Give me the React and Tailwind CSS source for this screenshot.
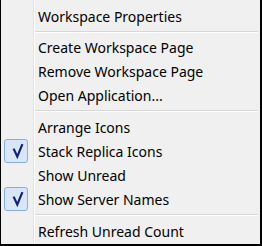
import React from "react";

function Check() {
  return (
    <div className="w-[24px] h-[24px] rounded-[3px] border border-[#86aee4] bg-[#d9e6f8] flex items-center justify-center">
      <svg width="22" height="22" viewBox="0 0 22 22">
        <path d="M8.6 8.6 L12.3 16.6 L17.4 4.2" fill="none" stroke="#14207f" strokeWidth="2.2" strokeLinejoin="miter" strokeLinecap="butt" />
      </svg>
    </div>
  );
}

function Item({ label, checked }) {
  return (
    <div className="flex items-center h-[24px]">
      <div className="w-[34px] shrink-0 pl-[3px] flex items-center">
        {checked ? <Check /> : null}
      </div>
      <span className="pl-[3px] whitespace-nowrap">{label}</span>
    </div>
  );
}

function Sep({ h }) {
  return (
    <div className={`flex items-center pl-[34px] pr-[2px] ${h}`}>
      <div className="flex-1 h-[2px] border-t border-[#d7d7d7] border-b border-b-white" />
    </div>
  );
}

export default function App() {
  return (
    <div
      className="w-[262px] h-[246px] border-l border-r-2 border-b-2 border-black bg-[linear-gradient(to_right,#f0f0f0_32px,#e2e3e3_32px,#e2e3e3_33px,#ffffff_33px,#ffffff_34px,#f0f0f0_34px)] text-[14px] text-black pt-[4px]"
      style={{ fontFamily: '"Noto Sans", "Open Sans", sans-serif' }}
    >
      <Item label="Workspace Properties" />
      <Sep h="h-[7px]" />
      <Item label="Create Workspace Page" />
      <Item label="Remove Workspace Page" />
      <Item label="Open Application..." />
      <Sep h="h-[8px]" />
      <Item label="Arrange Icons" />
      <Item label="Stack Replica Icons" checked />
      <Item label="Show Unread" />
      <Item label="Show Server Names" checked />
      <Sep h="h-[8px]" />
      <Item label="Refresh Unread Count" />
    </div>
  );
}
